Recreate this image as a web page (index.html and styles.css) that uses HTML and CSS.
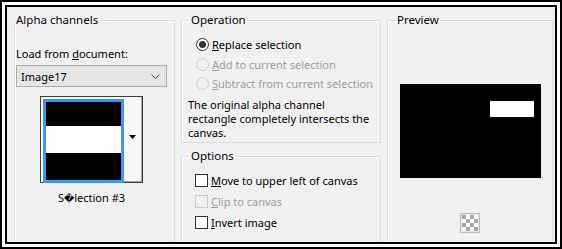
FILE: index.html
```html
<!DOCTYPE html>
<html>
<head>
<meta charset="utf-8">
<link rel="stylesheet" href="styles.css">
</head>
<body>
<div class="frame">
  <div class="dialog">
    <fieldset class="group alpha">
      <legend>Alpha channels</legend>
      <div class="label">Load from <u>d</u>ocument:</div>
      <div class="select">
        <span>Image17</span>
        <svg class="chev" width="9" height="5" viewBox="0 0 9 5"><path d="M0.5 0.5 L4.5 4.5 L8.5 0.5" fill="none" stroke="#444" stroke-width="1"/></svg>
      </div>
      <div class="thumbs">
        <div class="thumb">
          <div class="img">
            <div class="band b1"></div>
            <div class="band b2"></div>
            <div class="band b3"></div>
          </div>
        </div>
        <div class="thumb-btn">
          <svg width="7" height="4" viewBox="0 0 7 4"><path d="M0 0 H7 L3.5 4 Z" fill="#000"/></svg>
        </div>
      </div>
      <div class="caption">S<span class="bad">�</span>lection #3</div>
    </fieldset>

    <div class="middle">
      <fieldset class="group operation">
        <legend class="inset">Operation</legend>
        <div class="radio-row">
          <span class="radio checked"></span><span><u>R</u>eplace selection</span>
        </div>
        <div class="radio-row disabled">
          <span class="radio"></span><span><u>A</u>dd to current selection</span>
        </div>
        <div class="radio-row disabled">
          <span class="radio"></span><span><u>S</u>ubtract from current selection</span>
        </div>
        <p class="desc">The original alpha channel<br>rectangle completely intersects the<br>canvas.</p>
      </fieldset>
      <fieldset class="group options">
        <legend class="inset">Options</legend>
        <div class="check-row"><span class="check"></span><span><u>M</u>ove to upper left of canvas</span></div>
        <div class="check-row disabled"><span class="check"></span><span><u>C</u>lip to canvas</span></div>
        <div class="check-row"><span class="check"></span><span><u>I</u>nvert image</span></div>
      </fieldset>
    </div>

    <fieldset class="group preview">
      <legend class="inset">Preview</legend>
      <div class="canvas">
        <div class="sel"></div>
      </div>
      <div class="checker">
        <svg width="20" height="20" viewBox="0 0 20 20">
          <rect x="0.5" y="0.5" width="19" height="19" fill="#e6e6e6" stroke="#bdbdbd"/>
          <rect x="2" y="2" width="16" height="16" fill="#fff"/>
          <g fill="#a6a6a6">
            <rect x="2" y="2" width="4" height="4"/><rect x="10" y="2" width="4" height="4"/>
            <rect x="6" y="6" width="4" height="4"/><rect x="14" y="6" width="4" height="4"/>
            <rect x="2" y="10" width="4" height="4"/><rect x="10" y="10" width="4" height="4"/>
            <rect x="6" y="14" width="4" height="4"/><rect x="14" y="14" width="4" height="4"/>
          </g>
        </svg>
      </div>
    </fieldset>
  </div>
</div>
</body>
</html>
```

FILE: styles.css
```css
* { box-sizing: border-box; }
html, body { margin: 0; padding: 0; background: #fff; }
body {
  font-family: "Noto Sans", "DejaVu Sans", sans-serif;
  font-size: 11px;
  line-height: 15px;
  color: #000;
}
.frame {
  width: 562px;
  height: 249px;
  border: 2px solid #000;
  padding: 3px;
  background: #fff;
}
.dialog {
  width: 100%;
  height: 100%;
  border: 2px solid #000;
  background: #f0f0f0;
  display: flex;
  gap: 6px;
  padding: 5px 0 0 7px;
  overflow: hidden;
}
.group {
  margin: 0;
  padding: 0;
  border: 1px solid #dcdcdc;
  box-shadow: inset 1px 1px 0 #fff;
  min-width: 0;
  height: 260px;
  flex: none;
}
.group legend {
  padding: 0 1px;
  margin-left: 0;
  line-height: 16px;
  font-size: 11.5px;
}
.group legend.inset { margin-left: 8px; }
.alpha { width: 161px; display: flex; flex-direction: column; }
.alpha .label { margin: 18px 0 0 1px; }
.select {
  margin: 4px 0 0 1px;
  width: 151px;
  height: 22px;
  border: 1px solid #adadad;
  background: #e5e5e5;
  display: flex;
  align-items: center;
  justify-content: space-between;
  padding: 0 6px 0 4px;
}
.chev { display: block; }
.thumbs {
  margin: 9px 0 0 25px;
  width: 103px;
  height: 87px;
  border: 1px solid #3c3c3c;
  background: #fff;
  display: flex;
}
.thumb { padding: 2px 0 0 2px; }
.img {
  width: 81px;
  height: 84px;
  border: 3px solid #3399ff;
  display: flex;
  flex-direction: column;
}
.band { background: #000; }
.b1 { height: 24px; }
.b2 { height: 27px; background: #fff; }
.b3 { flex: 1; }
.thumb-btn {
  flex: 1;
  background: #f7f7f7;
  border-right: 1px solid #a0a0a0;
  border-bottom: 1px solid #a0a0a0;
  display: flex;
  align-items: center;
  justify-content: center;
  padding-bottom: 4px;
}
.thumb-btn svg { display: block; }
.caption {
  margin: 7px 0 0 25px;
  width: 103px;
  text-align: center;
}
.bad { font-family: "DejaVu Sans", sans-serif; font-size: 10px; }
.middle {
  width: 200px;
  display: flex;
  flex-direction: column;
  gap: 5px;
  flex: none;
}
.operation { height: 131px; padding: 0; }
.radio-row {
  display: flex;
  align-items: center;
  gap: 3px;
  height: 19.5px;
  margin-left: 14px;
  white-space: nowrap;
}
.radio-row:first-of-type { margin-top: 7px; }
.radio {
  width: 13px;
  height: 13px;
  border-radius: 50%;
  border: 1px solid #333;
  background: #fff;
  flex: none;
  position: relative;
}
.radio.checked::after {
  content: "";
  position: absolute;
  left: 2px; top: 2px;
  width: 7px; height: 7px;
  border-radius: 50%;
  background: #333;
}
.disabled { color: #a0a0a0; }
.disabled .radio, .disabled .check { border-color: #cccccc; background: #f0f0f0; }
.desc { margin: 4px 0 0 6px; white-space: nowrap; line-height: 14px; }
.options { height: 120px; padding: 0; }
.check-row {
  display: flex;
  align-items: center;
  gap: 3px;
  height: 21px;
  margin-left: 13px;
  white-space: nowrap;
}
.check-row:first-of-type { margin-top: 6px; }
.check {
  width: 13px;
  height: 13px;
  border: 1px solid #333;
  background: #fff;
  flex: none;
}
.preview { width: 166px; display: flex; flex-direction: column; align-items: center; }
.canvas {
  margin-top: 56px;
  width: 141px;
  height: 94px;
  background: #000;
  position: relative;
}
.sel {
  position: absolute;
  left: 90px;
  top: 17px;
  width: 44px;
  height: 16px;
  background: #fff;
}
.checker { margin-top: 35px; }
.checker svg { display: block; }
```
